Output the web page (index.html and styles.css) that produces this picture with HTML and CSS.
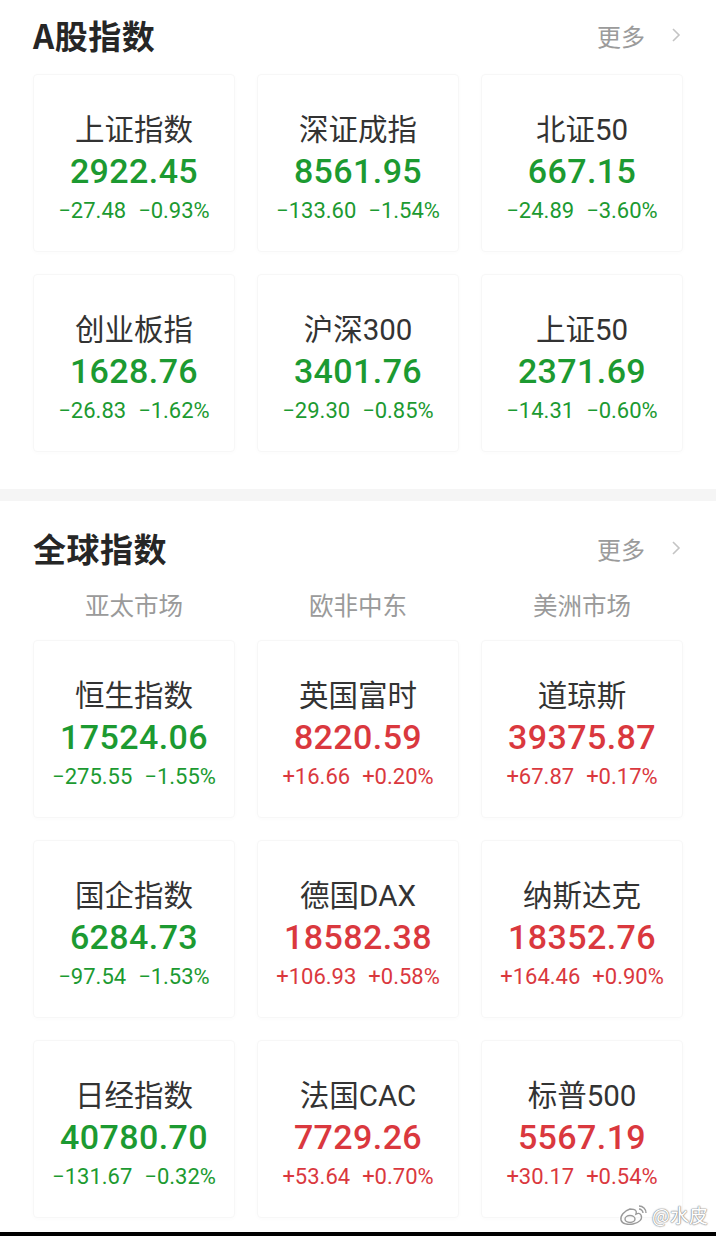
FILE: index.html
```html
<!DOCTYPE html>
<html lang="zh-CN">
<head>
  <meta charset="UTF-8" />
  <meta name="viewport" content="width=device-width, initial-scale=1.0"/>
  <title>指数行情</title>
  <link rel="stylesheet" href="styles.css">
</head>
<body>
  <section class="block first">
    <div class="block-head">
      <h2>A股指数</h2>
      <span class="more">更多
        <svg width="12" height="18" viewBox="0 0 12 18"><path d="M3 3 L9 9 L3 15" fill="none" stroke="#c4c4c4" stroke-width="1.6"/></svg>
      </span>
    </div>
    <div class="grid">
      <div class="card down"><div class="name">上证指数</div><div class="value">2922.45</div><div class="chg"><span>−27.48</span><span>−0.93%</span></div></div>
      <div class="card down"><div class="name">深证成指</div><div class="value">8561.95</div><div class="chg"><span>−133.60</span><span>−1.54%</span></div></div>
      <div class="card down"><div class="name">北证50</div><div class="value">667.15</div><div class="chg"><span>−24.89</span><span>−3.60%</span></div></div>
      <div class="card down"><div class="name">创业板指</div><div class="value">1628.76</div><div class="chg"><span>−26.83</span><span>−1.62%</span></div></div>
      <div class="card down"><div class="name">沪深300</div><div class="value">3401.76</div><div class="chg"><span>−29.30</span><span>−0.85%</span></div></div>
      <div class="card down"><div class="name">上证50</div><div class="value">2371.69</div><div class="chg"><span>−14.31</span><span>−0.60%</span></div></div>
    </div>
  </section>

  <div class="divider"></div>

  <section class="block second">
    <div class="block-head">
      <h2>全球指数</h2>
      <span class="more">更多
        <svg width="12" height="18" viewBox="0 0 12 18"><path d="M3 3 L9 9 L3 15" fill="none" stroke="#c4c4c4" stroke-width="1.6"/></svg>
      </span>
    </div>
    <div class="regions">
      <span>亚太市场</span>
      <span>欧非中东</span>
      <span>美洲市场</span>
    </div>
    <div class="grid">
      <div class="card down"><div class="name">恒生指数</div><div class="value">17524.06</div><div class="chg"><span>−275.55</span><span>−1.55%</span></div></div>
      <div class="card up"><div class="name">英国富时</div><div class="value">8220.59</div><div class="chg"><span>+16.66</span><span>+0.20%</span></div></div>
      <div class="card up"><div class="name">道琼斯</div><div class="value">39375.87</div><div class="chg"><span>+67.87</span><span>+0.17%</span></div></div>
      <div class="card down"><div class="name">国企指数</div><div class="value">6284.73</div><div class="chg"><span>−97.54</span><span>−1.53%</span></div></div>
      <div class="card up"><div class="name">德国DAX</div><div class="value">18582.38</div><div class="chg"><span>+106.93</span><span>+0.58%</span></div></div>
      <div class="card up"><div class="name">纳斯达克</div><div class="value">18352.76</div><div class="chg"><span>+164.46</span><span>+0.90%</span></div></div>
      <div class="card down"><div class="name">日经指数</div><div class="value">40780.70</div><div class="chg"><span>−131.67</span><span>−0.32%</span></div></div>
      <div class="card up"><div class="name">法国CAC</div><div class="value">7729.26</div><div class="chg"><span>+53.64</span><span>+0.70%</span></div></div>
      <div class="card up"><div class="name">标普500</div><div class="value">5567.19</div><div class="chg"><span>+30.17</span><span>+0.54%</span></div></div>
    </div>
  </section>

  <div class="watermark">
    <svg width="30" height="24" viewBox="0 0 30 24">
      <path d="M12 6 C6 8 2 13 3 17 C4 21 10 22 15 21 C21 20 25 16 23 12 C22 10 20 10 18 11 C19 8 18 6 12 6 Z" fill="none" stroke="#fff" stroke-width="3.2"/>
      <path d="M12 6 C6 8 2 13 3 17 C4 21 10 22 15 21 C21 20 25 16 23 12 C22 10 20 10 18 11 C19 8 18 6 12 6 Z" fill="none" stroke="#9a9a9a" stroke-width="1.4"/>
      <ellipse cx="12" cy="16" rx="5" ry="3.5" fill="none" stroke="#9a9a9a" stroke-width="1.4"/>
      <path d="M21 3 C25 3 28 6 28 10 M21 6 C23 6 25 8 25 10" fill="none" stroke="#9a9a9a" stroke-width="1.4"/>
    </svg>
    <span>@水皮</span>
  </div>

  <div class="bottom-bar"></div>
</body>
</html>
```

FILE: styles.css
```css
body {
  margin: 0;
  width: 716px;
  height: 1236px;
  background: #fff;
  font-family: Roboto, "Noto Sans CJK SC", sans-serif;
  color: #333;
  position: relative;
  overflow: hidden;
}

.block { padding: 0 33px; }
.block.second { padding-top: 11px; }

.block-head {
  height: 72px;
  display: flex; align-items: center; justify-content: space-between;
}
.first .block-head { height: 70px; margin-bottom: 4px; }
.block-head h2 {
  margin: 0;
  font-size: 33px; font-weight: 700; color: #262626;
  font-family: "Noto Sans CJK SC", sans-serif;
  letter-spacing: 0.5px;
}
.more {
  display: flex; align-items: center; gap: 25px;
  font-family: "Noto Sans CJK SC", sans-serif;
  font-size: 24px; color: #9b9b9b;
  margin-right: 1px;
}

.grid {
  margin-top: 2px;
  display: grid;
  grid-template-columns: repeat(3, 1fr);
  gap: 22px;
}
.second .grid { margin-top: 13px; }

.card {
  height: 178px;
  box-sizing: border-box;
  padding-top: 37px;
  border: 1px solid #f7f7f7;
  border-radius: 4px;
  box-shadow: 0 1px 4px rgba(0,0,0,0.02);
  text-align: center;
}
.name {
  font-family: Roboto, "Noto Sans CJK SC", sans-serif;
  font-size: 29.5px; line-height: 36px; color: #333;
}
.value {
  font-size: 34px; line-height: 46px; font-weight: 500;
  letter-spacing: 0.4px;
}
.chg {
  font-size: 22px; line-height: 34px;
  display: flex; justify-content: center; gap: 12px;
}
.down .value, .down .chg { color: #1c9a31; }
.up .value, .up .chg { color: #da383e; }

.divider {
  margin-top: 37px;
  height: 12px;
  background: #f5f5f5;
}

.regions {
  height: 40px;
  padding-top: 3px;
  display: grid;
  grid-template-columns: repeat(3, 1fr);
  gap: 22px;
  text-align: center;
  font-family: "Noto Sans CJK SC", sans-serif;
  font-size: 24.5px; line-height: 36px; color: #9a9a9a;
}

.watermark {
  position: absolute; right: 8px; bottom: 8px;
  display: flex; align-items: center; gap: 4px;
  font-family: "Noto Sans CJK SC", sans-serif;
  font-size: 19px; color: #fff;
  text-shadow: 0 0 1px #888, 0 0 1px #888, 0 0 2px #999;
}

.bottom-bar {
  position: absolute; left: 0; right: 0; bottom: 0;
  height: 4px; background: #000;
}
```
